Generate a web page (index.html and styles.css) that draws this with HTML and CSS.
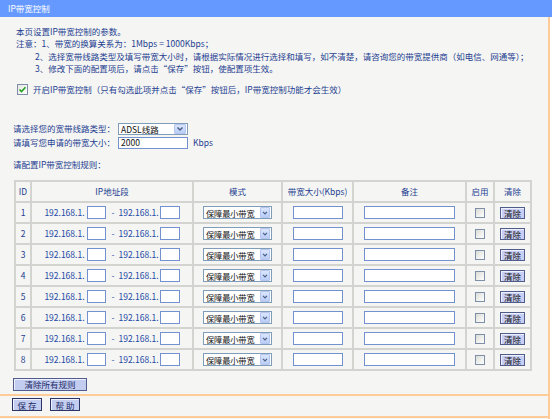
FILE: index.html
```html
<!DOCTYPE html>
<html lang="zh-CN">
<head>
<meta charset="utf-8">
<title>IP带宽控制</title>
<link rel="stylesheet" href="styles.css">
</head>
<body>
<div class="title">IP带宽控制</div>
<div class="main">
  <div class="content">
    <div class="intro">
      <p>本页设置IP带宽控制的参数。</p>
      <p>注意：1、带宽的换算关系为：1Mbps = 1000Kbps；</p>
      <p class="ind">2、选择宽带线路类型及填写带宽大小时，请根据实际情况进行选择和填写，如不清楚，请咨询您的带宽提供商（如电信、网通等）；</p>
      <p class="ind">3、修改下面的配置项后，请点击“保存”按钮，使配置项生效。</p>
    </div>
    <div class="enable">
      <span class="cb checked"><svg viewBox="0 0 9 9" width="9" height="9"><polyline points="1.5,4.5 3.5,6.5 7.5,2.2" fill="none" stroke="#21a121" stroke-width="1.6"/></svg></span>
      <span>开启IP带宽控制（只有勾选此项并点击“保存”按钮后，IP带宽控制功能才会生效）</span>
    </div>
    <div class="form">
      <div class="frow">
        <span class="lbl">请选择您的宽带线路类型：</span>
        <span class="select wide"><span class="val">ADSL线路</span><span class="arrow"><svg viewBox="0 0 10 10" width="10" height="10"><polyline points="2.5,3.5 5,6 7.5,3.5" fill="none" stroke="#4d6185" stroke-width="1.5"/></svg></span></span>
      </div>
      <div class="frow">
        <span class="lbl">请填写您申请的带宽大小：</span>
        <input class="field wide" type="text" value="2000">
        <span class="unit">Kbps</span>
      </div>
    </div>
    <div class="rules-title">请配置IP带宽控制规则：</div>
    <table class="rules">
      <colgroup>
        <col class="c-id"><col class="c-ip"><col class="c-mode"><col class="c-bw"><col class="c-note"><col class="c-en"><col class="c-clr">
      </colgroup>
      <thead>
        <tr><th>ID</th><th>IP地址段</th><th>模式</th><th>带宽大小(Kbps)</th><th>备注</th><th>启用</th><th>清除</th></tr>
      </thead>
      <tbody>
        <tr><td class="id">1</td><td><div class="ip"><span>192.168.1.</span><input class="ipbox" type="text"><span class="dash">-</span><span>192.168.1.</span><input class="ipbox two" type="text"></div></td><td><span class="select mode"><span class="val">保障最小带宽</span><span class="arrow"><svg viewBox="0 0 10 10" width="10" height="10"><polyline points="2.5,3.5 5,6 7.5,3.5" fill="none" stroke="#4d6185" stroke-width="1.5"/></svg></span></span></td><td><input class="field bw" type="text"></td><td><input class="field note" type="text"></td><td><span class="cb"></span></td><td><button class="btn clr">清除</button></td></tr>
        <tr><td class="id">2</td><td><div class="ip"><span>192.168.1.</span><input class="ipbox" type="text"><span class="dash">-</span><span>192.168.1.</span><input class="ipbox two" type="text"></div></td><td><span class="select mode"><span class="val">保障最小带宽</span><span class="arrow"><svg viewBox="0 0 10 10" width="10" height="10"><polyline points="2.5,3.5 5,6 7.5,3.5" fill="none" stroke="#4d6185" stroke-width="1.5"/></svg></span></span></td><td><input class="field bw" type="text"></td><td><input class="field note" type="text"></td><td><span class="cb"></span></td><td><button class="btn clr">清除</button></td></tr>
        <tr><td class="id">3</td><td><div class="ip"><span>192.168.1.</span><input class="ipbox" type="text"><span class="dash">-</span><span>192.168.1.</span><input class="ipbox two" type="text"></div></td><td><span class="select mode"><span class="val">保障最小带宽</span><span class="arrow"><svg viewBox="0 0 10 10" width="10" height="10"><polyline points="2.5,3.5 5,6 7.5,3.5" fill="none" stroke="#4d6185" stroke-width="1.5"/></svg></span></span></td><td><input class="field bw" type="text"></td><td><input class="field note" type="text"></td><td><span class="cb"></span></td><td><button class="btn clr">清除</button></td></tr>
        <tr><td class="id">4</td><td><div class="ip"><span>192.168.1.</span><input class="ipbox" type="text"><span class="dash">-</span><span>192.168.1.</span><input class="ipbox two" type="text"></div></td><td><span class="select mode"><span class="val">保障最小带宽</span><span class="arrow"><svg viewBox="0 0 10 10" width="10" height="10"><polyline points="2.5,3.5 5,6 7.5,3.5" fill="none" stroke="#4d6185" stroke-width="1.5"/></svg></span></span></td><td><input class="field bw" type="text"></td><td><input class="field note" type="text"></td><td><span class="cb"></span></td><td><button class="btn clr">清除</button></td></tr>
        <tr><td class="id">5</td><td><div class="ip"><span>192.168.1.</span><input class="ipbox" type="text"><span class="dash">-</span><span>192.168.1.</span><input class="ipbox two" type="text"></div></td><td><span class="select mode"><span class="val">保障最小带宽</span><span class="arrow"><svg viewBox="0 0 10 10" width="10" height="10"><polyline points="2.5,3.5 5,6 7.5,3.5" fill="none" stroke="#4d6185" stroke-width="1.5"/></svg></span></span></td><td><input class="field bw" type="text"></td><td><input class="field note" type="text"></td><td><span class="cb"></span></td><td><button class="btn clr">清除</button></td></tr>
        <tr><td class="id">6</td><td><div class="ip"><span>192.168.1.</span><input class="ipbox" type="text"><span class="dash">-</span><span>192.168.1.</span><input class="ipbox two" type="text"></div></td><td><span class="select mode"><span class="val">保障最小带宽</span><span class="arrow"><svg viewBox="0 0 10 10" width="10" height="10"><polyline points="2.5,3.5 5,6 7.5,3.5" fill="none" stroke="#4d6185" stroke-width="1.5"/></svg></span></span></td><td><input class="field bw" type="text"></td><td><input class="field note" type="text"></td><td><span class="cb"></span></td><td><button class="btn clr">清除</button></td></tr>
        <tr><td class="id">7</td><td><div class="ip"><span>192.168.1.</span><input class="ipbox" type="text"><span class="dash">-</span><span>192.168.1.</span><input class="ipbox two" type="text"></div></td><td><span class="select mode"><span class="val">保障最小带宽</span><span class="arrow"><svg viewBox="0 0 10 10" width="10" height="10"><polyline points="2.5,3.5 5,6 7.5,3.5" fill="none" stroke="#4d6185" stroke-width="1.5"/></svg></span></span></td><td><input class="field bw" type="text"></td><td><input class="field note" type="text"></td><td><span class="cb"></span></td><td><button class="btn clr">清除</button></td></tr>
        <tr><td class="id">8</td><td><div class="ip"><span>192.168.1.</span><input class="ipbox" type="text"><span class="dash">-</span><span>192.168.1.</span><input class="ipbox two" type="text"></div></td><td><span class="select mode"><span class="val">保障最小带宽</span><span class="arrow"><svg viewBox="0 0 10 10" width="10" height="10"><polyline points="2.5,3.5 5,6 7.5,3.5" fill="none" stroke="#4d6185" stroke-width="1.5"/></svg></span></span></td><td><input class="field bw" type="text"></td><td><input class="field note" type="text"></td><td><span class="cb"></span></td><td><button class="btn clr">清除</button></td></tr>
      </tbody>
    </table>
    <button class="btn clear-all">清除所有规则</button>
  </div>
  <div class="footer">
    <button class="btn foot">保 存</button>
    <button class="btn foot">帮 助</button>
  </div>
</div>
</body>
</html>
```
FILE: styles.css
```css
* { box-sizing: border-box; }
html, body { margin: 0; padding: 0; }
body {
  width: 552px;
  height: 419px;
  overflow: hidden;
  background: #ffffff;
  font-family: "Noto Sans CJK SC", "Noto Sans", sans-serif;
  font-size: 8.5px;
  line-height: 13px;
  color: #1d3e91;
}
.title {
  height: 17px;
  line-height: 17px;
  background: #6699ff;
  color: #ffffff;
  padding-left: 8px;
}
.main {
  width: 550px;
  height: 402px;
  background: #f5f5f3;
  border-right: 2px solid #ffcc99;
  display: flex;
  flex-direction: column;
}
.content {
  flex: 1;
  padding-top: 8px;
}
.intro p {
  margin: 0;
  line-height: 12.4px;
  padding-left: 16px;
  white-space: nowrap;
}
.intro p.ind { padding-left: 35px; }

.enable {
  display: flex;
  align-items: center;
  height: 13px;
  margin-top: 8px;
  padding-left: 17px;
}
.cb {
  display: inline-flex;
  align-items: center;
  justify-content: center;
  width: 10px;
  height: 10px;
  border: 1px solid #7e8ea8;
  background: linear-gradient(135deg, #dcdcd6, #ffffff);
  vertical-align: middle;
}
.cb.checked {
  width: 11px;
  height: 11px;
  margin-right: 5px;
  background: linear-gradient(135deg, #e6e6e0, #ffffff);
}

.form {
  margin-top: 26px;
  padding-left: 13px;
}
.frow {
  display: flex;
  align-items: center;
  height: 14px;
}
.lbl { width: 105px; }
.select {
  display: inline-flex;
  align-items: center;
  justify-content: space-between;
  height: 12px;
  background: #ffffff;
  border: 1px solid #7f9db9;
  color: #111111;
  padding-left: 2px;
  padding-right: 1px;
  vertical-align: middle;
  overflow: hidden;
}
.select .val { line-height: 10px; white-space: nowrap; flex: none; }
.select .arrow {
  flex: none;
  display: inline-flex;
  align-items: center;
  justify-content: center;
  width: 12px;
  height: 10px;
  background: linear-gradient(#dbe6fd, #b9cdf7);
  border: 1px solid #b4c6ee;
  border-radius: 1px;
}
.select.wide { width: 70px; }
.select.mode { width: 69px; height: 13px; padding-left: 2px; }
.select.mode .val { font-size: 8.2px; letter-spacing: -0.1px; }
.select.mode .arrow { width: 10px; height: 11px; }

.field {
  display: inline-block;
  height: 12px;
  margin: 0;
  padding: 0 0 0 2px;
  border: 1px solid #7391cf;
  background: #ffffff;
  font: inherit;
  font-size: 8.5px;
  color: #111111;
  vertical-align: middle;
  outline: none;
}
.field.wide { width: 70px; }
.unit { margin-left: 5px; }

.rules-title {
  margin-top: 8px;
  padding-left: 13px;
  line-height: 13px;
}

.rules {
  margin: 9px 0 0 14px;
  width: 516px;
  table-layout: fixed;
  border-collapse: collapse;
}
.rules th, .rules td {
  border: 2px solid #d3d3cf;
  padding: 0;
  text-align: center;
  vertical-align: middle;
  font-weight: normal;
  white-space: nowrap;
}
.rules tr { height: 21px; }
.c-id { width: 16px; }
.c-ip { width: 162px; }
.c-mode { width: 89px; }
.c-bw { width: 71px; }
.c-note { width: 113px; }
.c-en { width: 28px; }
.c-clr { width: 37px; }

.ip {
  display: flex;
  align-items: center;
  justify-content: center;
  color: #2348a6;
}
.ipbox {
  width: 19px;
  height: 13px;
  margin: 0 0 0 2px;
  padding: 0;
  border: 1px solid #7391cf;
  background: #ffffff;
  outline: none;
}
.ipbox.two { width: 20px; margin-left: 1px; }
.dash { margin: 0 4px 0 6px; }

.field.bw { width: 50px; height: 13px; }
.field.note { width: 91px; height: 13px; }

.btn {
  font-family: inherit;
  font-size: 8.5px;
  line-height: 10px;
  margin: 0;
  padding: 0;
  color: #111111;
  background: #c9cff4;
  border: 1px solid #4f5c8c;
  box-shadow: inset 1px 1px 0 #eef0ff;
  vertical-align: middle;
}
.btn.clr { width: 25px; height: 12px; }
.btn.clear-all {
  display: block;
  width: 74px;
  height: 13px;
  margin: 7px 0 0 13px;
  color: #1b2a66;
  background: #c3cdf0;
}
.footer {
  height: 24px;
  border-top: 2px solid #ffcc99;
  border-bottom: 2px solid #ffcc99;
  margin-bottom: 1px;
  padding: 2px 0 0 12px;
  display: flex;
  gap: 8px;
}
.btn.foot {
  width: 30px;
  height: 13px;
  color: #1b2a66;
  background: #c3cdf0;
  border-color: #2a3566;
}
```
